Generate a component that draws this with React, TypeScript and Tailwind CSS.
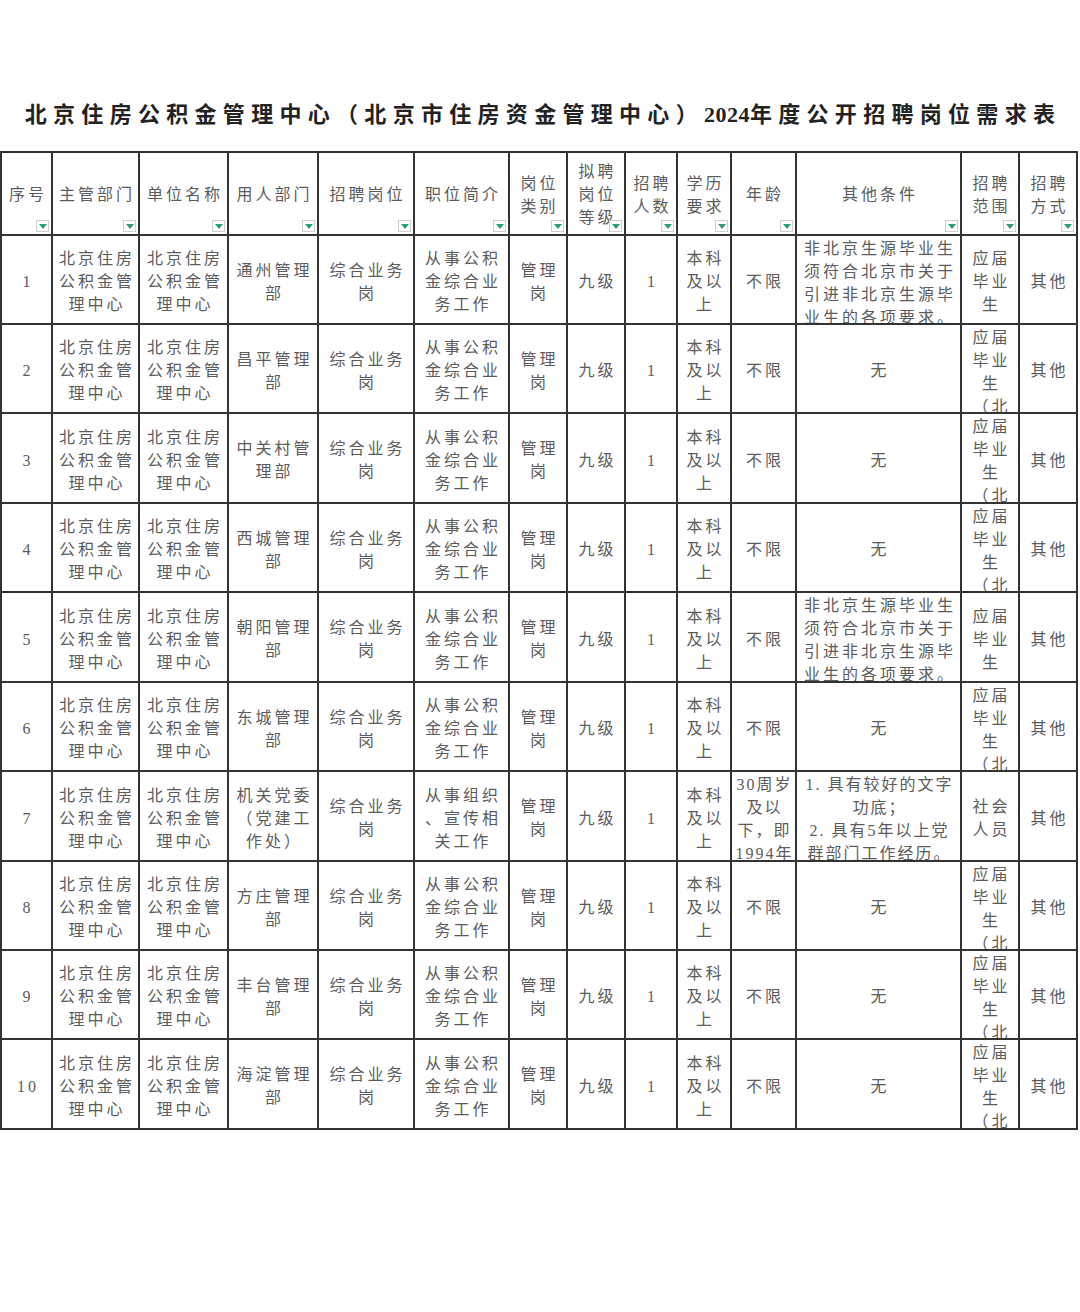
import React from "react"

type Cell = { lines: string[]; top?: boolean; tight?: boolean }

const headers: string[][] = [
  ["序号"],
  ["主管部门"],
  ["单位名称"],
  ["用人部门"],
  ["招聘岗位"],
  ["职位简介"],
  ["岗位", "类别"],
  ["拟聘", "岗位", "等级"],
  ["招聘", "人数"],
  ["学历", "要求"],
  ["年龄"],
  ["其他条件"],
  ["招聘", "范围"],
  ["招聘", "方式"],
]

const depts = [
  ["通州管理", "部"],
  ["昌平管理", "部"],
  ["中关村管", "理部"],
  ["西城管理", "部"],
  ["朝阳管理", "部"],
  ["东城管理", "部"],
  ["机关党委", "（党建工", "作处）"],
  ["方庄管理", "部"],
  ["丰台管理", "部"],
  ["海淀管理", "部"],
]

const unit = ["北京住房", "公积金管", "理中心"]
const nonLocal = ["非北京生源毕业生", "须符合北京市关于", "引进非北京生源毕", "业生的各项要求。"]

function buildRow(i: number): Cell[] {
  const special = i === 6
  const nl = i === 0 || i === 4
  return [
    { lines: [String(i + 1)] },
    { lines: unit },
    { lines: unit },
    { lines: depts[i] },
    { lines: ["综合业务", "岗"] },
    { lines: special ? ["从事组织", "、宣传相", "关工作"] : ["从事公积", "金综合业", "务工作"] },
    { lines: ["管理", "岗"] },
    { lines: ["九级"] },
    { lines: ["1"] },
    { lines: ["本科", "及以", "上"] },
    special
      ? { lines: ["30周岁", "及以", "下，即", "1994年"], top: true, tight: true }
      : { lines: ["不限"] },
    special
      ? {
          lines: ["1. 具有较好的文字", "功底；", "2. 具有5年以上党", "群部门工作经历。"],
          top: true,
          tight: true,
        }
      : nl
        ? { lines: nonLocal, top: true }
        : { lines: ["无"] },
    special
      ? { lines: ["社会", "人员"] }
      : nl
        ? { lines: ["应届", "毕业", "生"] }
        : { lines: ["应届", "毕业", "生", "（北"], top: true },
    { lines: ["其他"] },
  ]
}

function Dropdown() {
  return (
    <div className="absolute right-[2px] bottom-[2px] w-[13px] h-[12px] border border-[#cfcfcf] bg-white flex items-center justify-center">
      <svg width="8" height="5" viewBox="0 0 8 5">
        <polygon points="0,0 8,0 4,5" fill="#2f9a6c" />
      </svg>
    </div>
  )
}

export default function App() {
  const rows = Array.from({ length: 10 }, (_, i) => buildRow(i))
  return (
    <div className="w-[1080px] h-[1312px] bg-white font-['Liberation_Serif','Noto_Sans_CJK_SC',serif]">
      <div className="pt-[100px] h-[130px] text-center text-[22px] leading-[30px] font-bold tracking-[6.3px] pl-[6px] text-[#222] whitespace-nowrap">
        北京住房公积金管理中心（北京市住房资金管理中心）
        <span className="tracking-[0.5px]">2024</span>
        年度公开招聘岗位需求表
      </div>
      <div className="mt-[21px] w-[1078px] grid grid-cols-[51px_87px_89px_90px_96px_95px_58px_58px_52px_54px_65px_165px_58px_58px] grid-rows-[83px_89px_89px_90px_89px_90px_89px_90px_89px_89px_90px] border-l-2 border-t-2 border-[#333]">
        {headers.map((h, i) => (
          <div
            key={"h" + i}
            className="relative flex flex-col items-center justify-center overflow-hidden border-r-2 border-b-2 border-[#333] pl-[3px] pt-[2px] text-[16px] leading-[23px] tracking-[3px] text-[#5c5c5c]"
          >
            {h.map((l, j) => (
              <div key={j} className="whitespace-nowrap">
                {l}
              </div>
            ))}
            <Dropdown />
          </div>
        ))}
        {rows.map((r, ri) =>
          r.map((c, ci) => (
            <div
              key={ri + "-" + ci}
              className={
                "flex flex-col items-center overflow-hidden border-r-2 border-b-2 border-[#333] text-[16px] leading-[23px] text-[#5c5c5c] " +
                (c.top ? "justify-start pt-[1px] " : "justify-center pt-[4px] ") +
                (c.tight ? "tracking-[2px] pl-[2px]" : "tracking-[3px] pl-[3px]")
              }
            >
              {c.lines.map((l, j) => (
                <div key={j} className="whitespace-nowrap">
                  {l}
                </div>
              ))}
            </div>
          ))
        )}
      </div>
    </div>
  )
}
